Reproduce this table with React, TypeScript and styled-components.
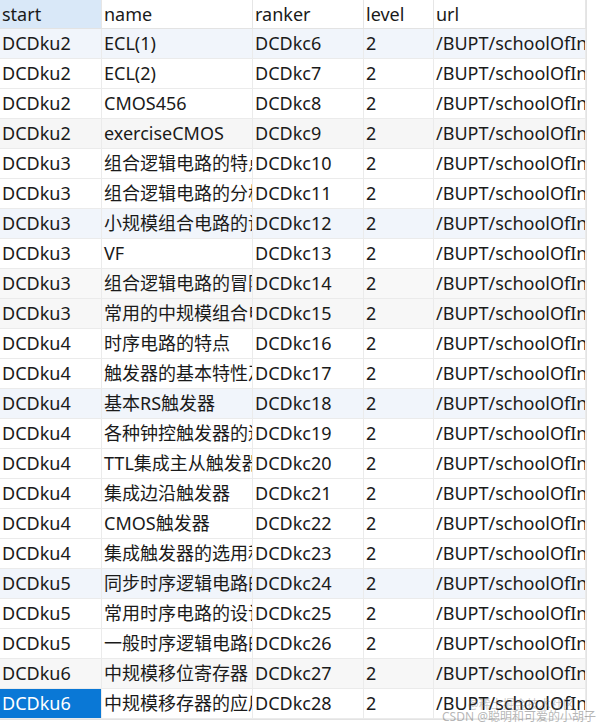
import React from "react";
import styled, { createGlobalStyle } from "styled-components";

const Global = createGlobalStyle`
  html, body { margin: 0; padding: 0; background: #ffffff; }
  body { font-family: "Noto Sans", "Noto Sans CJK SC", sans-serif; }
`;

const Wrap = styled.div`
  position: relative;
  width: 598px;
  height: 724px;
  overflow: hidden;
  background: #ffffff;
`;

const Table = styled.div`
  display: grid;
  grid-template-columns: 102px 151px 111px 70px 152px;
  width: 586px;
  border-right: 1px solid #e3e3e3;
  border-bottom: 1px solid #e3e3e3;
  font-size: 18px;
  color: #1a1a1a;
`;

const Head = styled.div<{ $active?: boolean }>`
  height: 29px;
  line-height: 28px;
  padding-left: 2px;
  background: ${(p) => (p.$active ? "#d9e8f8" : "#ffffff")};
  border-right: 1px solid #e6e6e6;
  border-bottom: 1px solid #e3e3e3;
  box-sizing: border-box;
  overflow: hidden;
  white-space: nowrap;
`;

const Cell = styled.div<{ $bg: string; $sel?: boolean }>`
  height: 30px;
  line-height: 29px;
  padding-left: 2px;
  background: ${(p) => (p.$sel ? "#0a78d6" : p.$bg)};
  color: ${(p) => (p.$sel ? "#ffffff" : "#1a1a1a")};
  border-right: 1px solid #ebebeb;
  border-bottom: 1px solid #ebebeb;
  box-sizing: border-box;
  overflow: hidden;
  white-space: nowrap;
`;

const Watermark = styled.div`
  position: absolute;
  left: 468px;
  top: 699px;
  font-size: 12px;
  color: rgba(120, 120, 120, 0.4);
  white-space: nowrap;
  line-height: 12px;
`;

const Watermark2 = styled.div`
  position: absolute;
  left: 442px;
  top: 711px;
  font-size: 12px;
  color: rgba(110, 110, 110, 0.5);
  white-space: nowrap;
  line-height: 12px;
`;

type Row = [string, string, string, string, string];

const rows: Row[] = [
  ["DCDku2", "ECL(1)", "DCDkc6", "2", "/BUPT/schoolOfInfo"],
  ["DCDku2", "ECL(2)", "DCDkc7", "2", "/BUPT/schoolOfInfo"],
  ["DCDku2", "CMOS456", "DCDkc8", "2", "/BUPT/schoolOfInfo"],
  ["DCDku2", "exerciseCMOS", "DCDkc9", "2", "/BUPT/schoolOfInfo"],
  ["DCDku3", "组合逻辑电路的特点", "DCDkc10", "2", "/BUPT/schoolOfInfo"],
  ["DCDku3", "组合逻辑电路的分析", "DCDkc11", "2", "/BUPT/schoolOfInfo"],
  ["DCDku3", "小规模组合电路的设计", "DCDkc12", "2", "/BUPT/schoolOfInfo"],
  ["DCDku3", "VF", "DCDkc13", "2", "/BUPT/schoolOfInfo"],
  ["DCDku3", "组合逻辑电路的冒险", "DCDkc14", "2", "/BUPT/schoolOfInfo"],
  ["DCDku3", "常用的中规模组合电路", "DCDkc15", "2", "/BUPT/schoolOfInfo"],
  ["DCDku4", "时序电路的特点", "DCDkc16", "2", "/BUPT/schoolOfInfo"],
  ["DCDku4", "触发器的基本特性及分类", "DCDkc17", "2", "/BUPT/schoolOfInfo"],
  ["DCDku4", "基本RS触发器", "DCDkc18", "2", "/BUPT/schoolOfInfo"],
  ["DCDku4", "各种钟控触发器的逻辑功能", "DCDkc19", "2", "/BUPT/schoolOfInfo"],
  ["DCDku4", "TTL集成主从触发器", "DCDkc20", "2", "/BUPT/schoolOfInfo"],
  ["DCDku4", "集成边沿触发器", "DCDkc21", "2", "/BUPT/schoolOfInfo"],
  ["DCDku4", "CMOS触发器", "DCDkc22", "2", "/BUPT/schoolOfInfo"],
  ["DCDku4", "集成触发器的选用和使用", "DCDkc23", "2", "/BUPT/schoolOfInfo"],
  ["DCDku5", "同步时序逻辑电路的分析", "DCDkc24", "2", "/BUPT/schoolOfInfo"],
  ["DCDku5", "常用时序电路的设计", "DCDkc25", "2", "/BUPT/schoolOfInfo"],
  ["DCDku5", "一般时序逻辑电路的设计", "DCDkc26", "2", "/BUPT/schoolOfInfo"],
  ["DCDku6", "中规模移位寄存器", "DCDkc27", "2", "/BUPT/schoolOfInfo"],
  ["DCDku6", "中规模移存器的应用", "DCDkc28", "2", "/BUPT/schoolOfInfo"],
];

const tints: Record<number, string> = {
  0: "#f1f5fb",
  3: "#f6f6f6",
  6: "#f1f5fb",
  8: "#f8f8f8",
  9: "#f7f7f7",
  12: "#f1f5fb",
  18: "#f1f5fb",
  21: "#f7f7f7",
};

const headers = ["start", "name", "ranker", "level", "url"];

export default function App() {
  return (
    <Wrap>
      <Global />
      <Table>
        {headers.map((h, i) => (
          <Head key={h} $active={i === 0}>
            {h}
          </Head>
        ))}
        {rows.map((r, ri) =>
          r.map((v, ci) => (
            <Cell
              key={`${ri}-${ci}`}
              $bg={tints[ri] ?? "#ffffff"}
              $sel={ri === rows.length - 1 && ci === 0}
            >
              {v}
            </Cell>
          ))
        )}
      </Table>
      <Watermark>@稀土掘金技术社区</Watermark>
      <Watermark2>CSDN @聪明和可爱的小胡子</Watermark2>
    </Wrap>
  );
}
